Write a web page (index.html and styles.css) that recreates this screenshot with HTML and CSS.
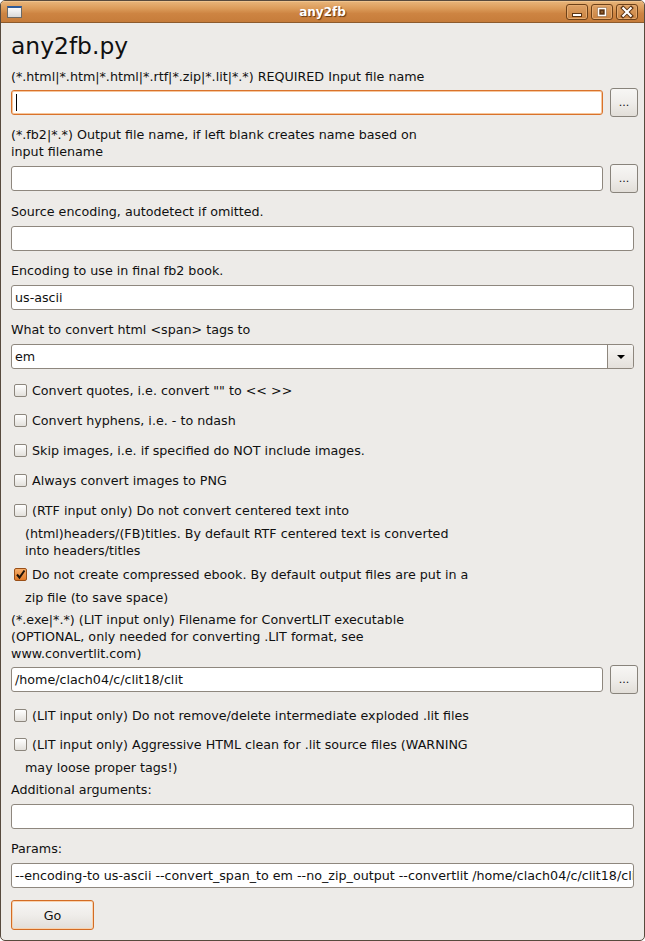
FILE: index.html
```html
<!DOCTYPE html>
<html>
<head>
<meta charset="utf-8">
<title>any2fb</title>
<link rel="stylesheet" href="styles.css">
</head>
<body>
<div class="window">
  <div class="titlebar">
    <div class="tb-left"><div class="win-icon"></div></div>
    <div class="title">any2fb</div>
    <div class="tb-right">
      <div class="wbtn">
        <svg width="20" height="14" viewBox="0 0 20 14"><rect x="5.5" y="8.5" width="9" height="3" fill="#fff" stroke="#5a3312" stroke-width="1"/></svg>
      </div>
      <div class="wbtn">
        <svg width="20" height="14" viewBox="0 0 20 14"><rect x="5.5" y="2.5" width="9" height="9" fill="#5a3312"/><rect x="6.5" y="3.5" width="7" height="7" fill="none" stroke="#fff" stroke-width="1.6"/><rect x="8.5" y="5.5" width="3" height="3" fill="#8a5a2c" stroke="#5a3312" stroke-width="0.8"/></svg>
      </div>
      <div class="wbtn">
        <svg width="20" height="14" viewBox="0 0 20 14"><path d="M6 3 L14 11 M14 3 L6 11" stroke="#5a3312" stroke-width="4" stroke-linecap="square"/><path d="M6.3 3.3 L13.7 10.7 M13.7 3.3 L6.3 10.7" stroke="#fff" stroke-width="2.2" stroke-linecap="square"/></svg>
      </div>
    </div>
  </div>
  <div class="content">
    <h1 class="app-title">any2fb.py</h1>

    <div class="label l1">(*.html|*.htm|*.html|*.rtf|*.zip|*.lit|*.*) REQUIRED Input file name</div>
    <div class="row r-tight">
      <div class="entry focused"><span class="caret"></span></div>
      <div class="btn browse">...</div>
    </div>

    <div class="label l2">(*.fb2|*.*) Output file name, if left blank creates name based on<br>input filename</div>
    <div class="row r-tight4">
      <div class="entry"></div>
      <div class="btn browse">...</div>
    </div>

    <div class="label l3">Source encoding, autodetect if omitted.</div>
    <div class="entry full e-after"></div>

    <div class="label l4">Encoding to use in final fb2 book.</div>
    <div class="entry full e-after">us-ascii</div>

    <div class="label l4">What to convert html &lt;span&gt; tags to</div>
    <div class="combo e-after">
      <div class="combo-text">em</div>
      <div class="combo-btn"><span class="arrow"></span></div>
    </div>

    <div class="check c-first"><span class="box"></span><span>Convert quotes, i.e. convert "" to &lt;&lt; &gt;&gt;</span></div>
    <div class="check c-next"><span class="box"></span><span>Convert hyphens, i.e. - to ndash</span></div>
    <div class="check c-next"><span class="box"></span><span>Skip images, i.e. if specified do NOT include images.</span></div>
    <div class="check c-next"><span class="box"></span><span>Always convert images to PNG</span></div>
    <div class="check c-next"><span class="box"></span><span>(RTF input only) Do not convert centered text into</span></div>
    <div class="cont">(html)headers/(FB)titles. By default RTF centered text is converted<br>into headers/titles</div>
    <div class="check c-after-cont"><span class="box checked"><svg width="11" height="11" viewBox="0 0 11 11"><path d="M2 5.5 L4.5 8.5 L9.5 1.5" fill="none" stroke="#1e1208" stroke-width="2"/></svg></span><span>Do not create compressed ebook. By default output files are put in a</span></div>
    <div class="cont">zip file (to save space)</div>

    <div class="label l-lit">(*.exe|*.*) (LIT input only) Filename for ConvertLIT executable<br>(OPTIONAL, only needed for converting .LIT format, see<br>www.convertlit.com)</div>
    <div class="row r-tight">
      <div class="entry">/home/clach04/c/clit18/clit</div>
      <div class="btn browse">...</div>
    </div>

    <div class="check c-first"><span class="box"></span><span>(LIT input only) Do not remove/delete intermediate exploded .lit files</span></div>
    <div class="check c-lit2"><span class="box"></span><span>(LIT input only) Aggressive HTML clean for .lit source files (WARNING</span></div>
    <div class="cont">may loose proper tags!)</div>

    <div class="label l-add">Additional arguments:</div>
    <div class="entry full e-after"></div>

    <div class="label l4">Params:</div>
    <div class="entry full e-after params">--encoding-to us-ascii --convert_span_to em --no_zip_output --convertlit /home/clach04/c/clit18/clit</div>

    <div class="btn go">Go</div>
  </div>
</div>
</body>
</html>
```

FILE: styles.css
```css
html, body {
  margin: 0;
  padding: 0;
}

body {
  width: 645px;
  height: 941px;
  overflow: hidden;
  background: #ffffff;
  font-family: "DejaVu Sans", "Liberation Sans", sans-serif;
  font-size: 12.7px;
  color: #101010;
}

.window {
  box-sizing: border-box;
  width: 645px;
  height: 941px;
  border: 1px solid #574a3d;
  border-radius: 5px 5px 5px 5px;
  background: #edebe8;
  display: flex;
  flex-direction: column;
  overflow: hidden;
}

/* ---------- title bar ---------- */
.titlebar {
  height: 21px;
  flex: none;
  display: grid;
  grid-template-columns: 1fr auto 1fr;
  align-items: center;
  padding: 0 6px;
  background: linear-gradient(#e8b67b 0%, #dc9c5a 35%, #cd8442 60%, #c67c3a 100%);
  border-bottom: 1px solid #8d5b2c;
  box-shadow: inset 0 1px 0 #f0c48e;
}

.tb-left {
  display: flex;
  align-items: center;
}

.win-icon {
  width: 13px;
  height: 9px;
  border: 1px solid #6d6a66;
  border-top: 2px solid #2e5b9a;
  background: linear-gradient(#fbfbfb, #d9d9d9);
  margin-top: 1px;
}

.title {
  color: #ffffff;
  font-weight: bold;
  font-size: 12px;
  text-shadow: 1px 1px 1px #5f3510;
}

.tb-right {
  display: flex;
  justify-content: flex-end;
  gap: 3px;
}

.wbtn {
  box-sizing: border-box;
  width: 22px;
  height: 16px;
  border: 1px solid #6d4118;
  border-radius: 3px;
  background: linear-gradient(#dea266, #c98240);
  box-shadow: inset 0 0 0 1px #e5ab70;
  display: flex;
  align-items: center;
  justify-content: center;
}

.wbtn svg {
  display: block;
}

/* ---------- content ---------- */
.content {
  padding: 0 10px;
  display: flex;
  flex-direction: column;
}

.app-title {
  margin: 10px 0 0 0;
  font-size: 23.4px;
  line-height: 27px;
  font-weight: normal;
  color: #101010;
}

.label {
  line-height: 17px;
  white-space: nowrap;
}

.l1 { margin-top: 8px; }
.l2 { margin-top: 9px; }
.l3 { margin-top: 10px; }
.l4 { margin-top: 11px; }
.l-lit { margin-top: 5px; }
.l-add { margin-top: 5px; }

.row {
  display: flex;
  align-items: center;
  gap: 7px;
  height: 29px;
  margin-right: -4px;
}

.r-tight { margin-top: 3px; }
.r-tight4 { margin-top: 4px; }

.entry {
  box-sizing: border-box;
  height: 25px;
  flex: 1;
  background: #ffffff;
  border: 1px solid #8e877e;
  border-radius: 3px;
  padding: 0 3px;
  line-height: 23px;
  white-space: nowrap;
  overflow: hidden;
  position: relative;
}

.entry.full {
  flex: none;
}

.e-after { margin-top: 6px; }

.entry.focused {
  border-color: #d9722b;
  box-shadow: inset 0 0 0 1px #f6c79d;
}

.caret {
  display: inline-block;
  width: 1px;
  height: 17px;
  background: #000;
  vertical-align: middle;
  margin-top: -2px;
  margin-left: 1px;
}

.params {
  padding-right: 1px;
}

.btn {
  box-sizing: border-box;
  border: 1px solid #88837b;
  border-radius: 3px;
  background: linear-gradient(#f7f6f4 0%, #efedea 50%, #e2ded8 100%);
  display: flex;
  align-items: center;
  justify-content: center;
}

.browse {
  width: 28px;
  height: 29px;
  flex: none;
  font-size: 11px;
  padding-bottom: 1px;
}

.combo {
  box-sizing: border-box;
  height: 25px;
  display: flex;
  background: #ffffff;
  border: 1px solid #8e877e;
  border-radius: 3px;
  overflow: hidden;
}

.combo-text {
  flex: 1;
  padding: 0 3px;
  line-height: 23px;
}

.combo-btn {
  width: 25px;
  border-left: 1px solid #8e877e;
  background: linear-gradient(#f7f6f4, #e4e0db);
  display: flex;
  align-items: center;
  justify-content: center;
}

.arrow {
  width: 0;
  height: 0;
  border-left: 4px solid transparent;
  border-right: 4px solid transparent;
  border-top: 4px solid #000;
}

.check {
  height: 24px;
  display: flex;
  align-items: center;
  gap: 5px;
  padding-left: 3px;
  white-space: nowrap;
}

.c-first { margin-top: 9px; }
.c-next { margin-top: 6px; }
.c-after-cont { margin-top: 3px; }
.c-lit2 { margin-top: 5px; }

.box {
  box-sizing: border-box;
  width: 13px;
  height: 13px;
  border: 1px solid #8c867d;
  border-radius: 2px;
  background: linear-gradient(#ffffff, #e3e0db);
  display: flex;
  align-items: center;
  justify-content: center;
  flex: none;
}

.box.checked {
  border-color: #9a4f17;
  background: linear-gradient(#f7ae6a, #e07a28);
}

.box svg {
  display: block;
}

.cont {
  margin-top: 3px;
  padding-left: 14px;
  line-height: 17px;
  white-space: nowrap;
}

.go {
  margin-top: 12px;
  width: 83px;
  height: 30px;
  border-color: #d36c24;
  box-shadow: inset 0 0 0 1px #f8d2ad;
}
```
